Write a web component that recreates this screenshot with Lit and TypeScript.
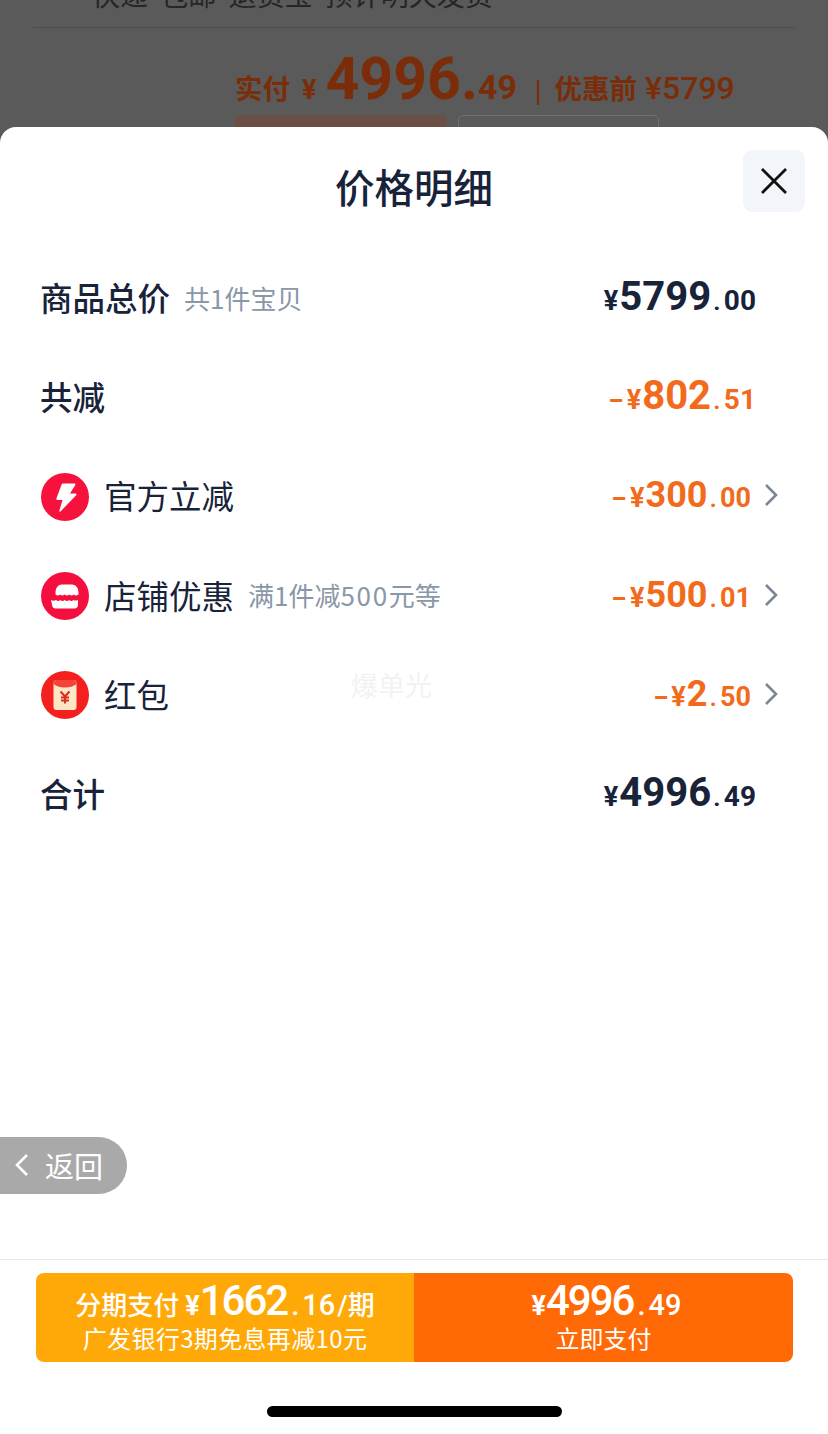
import { LitElement, html, css, svg } from "lit";
import { customElement } from "lit/decorators.js";

const bolt = html`<svg class="ic" viewBox="0 0 48 48"><circle cx="24" cy="24" r="24" fill="#f6123d"/><path d="M22 10.500h11.500c.8 0 1.200.8.8 1.500L29 20.500h5.500c.9 0 1.300 1 .7 1.700L19.500 38.500c-.6.6-1.500 0-1.200-.8L21.500 27h-5c-.8 0-1.300-.7-1.100-1.400L20.600 11.500c.2-.6.8-1 1.400-1z" fill="#fff"/></svg>`;
const store = html`<svg class="ic" viewBox="0 0 48 48"><circle cx="24" cy="24" r="24" fill="#f40f3f"/><path d="M17 12.500h14c4 0 6.500 3.500 6.500 8.500v1.500c-2 1.200-3.400 1.200-4.700 0-1.600 1.300-3 1.300-4.400 0-1.600 1.300-3.200 1.300-4.800 0-1.600 1.300-3 1.300-4.500 0-1.400 1.200-2.900 1.200-4.600 0V21c0-5 2.500-8.500 6.500-8.500z" fill="#fff"/><path d="M10.500 27.500c1.800.9 3.500.9 5 0 1.500 1.200 3 1.200 4.300 0 1.500 1.200 3 1.200 4.500 0 1.500 1.200 3 1.200 4.300 0 1.500 1.200 3 1.200 4.400 0 1.200.8 2.500.8 4.500 0V32c0 2.500-1.500 4-3.500 4h-19c-2 0-3.500-1.500-3.500-4z" fill="#fff" transform="translate(-.5 .5)"/></svg>`;
const packet = html`<svg class="ic" viewBox="0 0 48 48"><circle cx="24" cy="24" r="24" fill="#f4201e"/><rect x="12.500" y="9" width="23" height="30" rx="3" fill="#fde6c3"/><path d="M12.500 12c0-1.700 1.300-3 3-3h17c1.700 0 3 1.300 3 3v1c-3 2.500-7 3.400-11.500 3.400S15.500 15.500 12.500 13z" fill="#f4443a"/><path d="M19.500 20.500l4.500 5 4.500-5M24 25.500v7M20 26.500h8M20 29.500h8" fill="none" stroke="#d92b20" stroke-width="2"/></svg>`;
const chev = svg`<path d="M2 2l10 10L2 22" fill="none" stroke="#7b8794" stroke-width="2.600"/>`;

interface Row { kind: "plain" | "sub"; label: string; note?: unknown; icon?: unknown; minus?: boolean; big: string; dec: string; orange: boolean; }
const rows: Row[] = [
  { kind: "plain", label: "商品总价", note: "共1件宝贝", big: "5799", dec: "00", orange: false },
  { kind: "plain", label: "共减", minus: true, big: "802", dec: "51", orange: true },
  { kind: "sub", label: "官方立减", icon: bolt, minus: true, big: "300", dec: "00", orange: true },
  { kind: "sub", label: "店铺优惠", note: html`满1件减<span class="wide">500</span>元等`, icon: store, minus: true, big: "500", dec: "01", orange: true },
  { kind: "sub", label: "红包", icon: packet, minus: true, big: "2", dec: "50", orange: true },
  { kind: "plain", label: "合计", big: "4996", dec: "49", orange: false },
];

@customElement("app-root")
export class AppRoot extends LitElement {
  static styles = css`
    :host { display: block; width: 828px; height: 1434px; overflow: hidden; background: #5a5a5a;
      font-family: "Noto Sans CJK SC", "Noto Sans", sans-serif; color: #18233a; }
    .num { font-family: Roboto, "Noto Sans CJK SC", sans-serif; }
    .behind { height: 127px; overflow: hidden; display: flex; flex-direction: column; }
    .ship { margin: -21px 0 0 92px; height: 30px; font-size: 28px; line-height: 30px; color: #262626; white-space: nowrap; word-spacing: 6px; flex: none; }
    .rule { margin: 18px 33px 0 33px; height: 1px; background: #4e4e4e; flex: none; }
    .pay { display: flex; align-items: baseline; margin: 22px 0 0 235px; height: 58px; color: #7a2d08; white-space: nowrap; font-weight: 700; flex: none; }
    .pay .l { font-size: 27.500px; }
    .pay .y { font-size: 27px; margin: 0 9px 0 12px; }
    .pay .b { font-size: 59px; font-weight: 700; line-height: 58px; }
    .pay .d { font-size: 34px; }
    .pay .bar { font-size: 22px; margin: 0 13px 0 18px; }
    .pay .o { font-size: 32px; margin-left: 8px; font-weight: 500; }
    .tags { display: flex; gap: 11px; margin: 7px 0 0 235px; flex: none; }
    .tag { height: 40px; border-radius: 5px; box-sizing: border-box; border: 1px solid #6b4f45; }
    .tag.a { width: 212px; background: #6b4f45; }
    .tag.b { width: 201px; border-color: #7d6a60; }

    .sheet { height: 1307px; background: #fff; border-radius: 16px 16px 0 0; display: flex; flex-direction: column; position: relative; }
    .head { height: 123px; flex: none; display: flex; justify-content: center; box-sizing: border-box; padding-top: 31px; }
    .title { font-size: 39.500px; line-height: 56px; font-weight: 500; }
    .close { position: absolute; right: 23px; top: 23px; width: 62px; height: 62px; background: #f2f5f9; border-radius: 9px; display: flex; align-items: center; justify-content: center; }
    .close svg { width: 28px; height: 28px; }
    .rows { display: flex; flex-direction: column; padding: 0 50px 0 40px; }
    .row { height: 99.200px; display: flex; align-items: center; }
    .ic { width: 48px; height: 48px; margin: -2px 15px 0 1px; flex: none; }
    .label { font-size: 32.500px; line-height: 44px; white-space: nowrap; margin-bottom: 5px; }
    .plain .label { font-weight: 500; }
    .sub .label { font-weight: 400; }
    .note { font-size: 26px; color: #8a97a8; margin: 0 0 5px 14px; white-space: nowrap; }
    .wide { letter-spacing: 1.700px; }
    .amount { margin-left: auto; display: flex; align-items: baseline; white-space: nowrap; font-weight: 700; margin-bottom: 5px; }
    .amount.orange { color: #f26a1b; }
    .plain .amount { margin-right: 22px; }
    .amount .m { font-size: 27px; display: inline-block; transform: scaleX(1.600); margin: 0 5px 0 4px; }
    .amount .p { font-size: 27px; margin-right: 1px; }
    .amount .n { font-size: 40px; line-height: 44px; }
    .sub .amount .n { font-size: 36px; }
    .amount .d { font-size: 28px; font-weight: 700; }
    .amount .dot { margin: 0 3px 0 2px; font-weight: 500; }
    .sub .amount .d { font-size: 27px; }
    .sub svg.chev { width: 14px; height: 24px; margin: 0 0 5px 13px; flex: none; }
    .spacer { flex: 1; }
    .foot { flex: none; border-top: 1px solid #e8e8e8; height: 175px; box-sizing: border-box; padding: 13px 35px 0 36px; display: flex; flex-direction: column; }
    .btns { display: flex; height: 89px; border-radius: 8px; overflow: hidden; color: #fff; flex: none; }
    .btn { display: flex; flex-direction: column; align-items: center; justify-content: center; }
    .btn.l { width: 378px; background: #ffa908; }
    .btn.r { flex: 1; background: #ff6a07; }
    .line1 { display: flex; align-items: baseline; height: 40px; line-height: 40px; white-space: nowrap; font-weight: 500; margin-bottom: 2px; }
    .line1 .t { font-size: 26px; }
    .line1 .y { font-size: 27px; margin-left: 6px; font-weight: 700; }
    .line1 .n { font-size: 42px; font-weight: 500; letter-spacing: -2px; }
    .line1 .d { font-size: 29px; font-weight: 500; }
    .line1 .dot { margin: 0 3px 0 4px; }
    .line1 .s { font-size: 27px; margin-left: 2px; }
    .line2 { font-size: 24px; line-height: 30px; white-space: nowrap; margin-bottom: 2px; }
    .l .line2 { letter-spacing: .35px; }
    .home { width: 295px; height: 11px; background: #000; border-radius: 6px; margin: 44px 0 0 231px; flex: none; }

    .mark { position: absolute; left: 351px; top: 530px; font-size: 27px; line-height: 56px; color: #f2f2f2; }
    .back { position: absolute; left: 0; top: 1010px; width: 127px; height: 57px; background: #a9a9a9; border-radius: 0 29px 29px 0; display: flex; align-items: center; color: #fff; font-size: 29px; box-sizing: border-box; padding: 0 0 2px 15px; }
    .back svg { width: 14px; height: 24px; margin-right: 16px; }
  `;

  render() {
    return html`
      <div class="behind">
        <div class="ship">快递 包邮 退货宝 预计明天发货</div>
        <div class="rule"></div>
        <div class="pay">
          <span class="l">实付</span><span class="y num">¥</span><span class="b num">4996.</span><span class="d num">49</span><span class="bar">|</span><span class="l">优惠前</span><span class="o num">¥5799</span>
        </div>
        <div class="tags"><div class="tag a"></div><div class="tag b"></div></div>
      </div>
      <div class="sheet">
        <div class="head">
          <div class="title">价格明细</div>
          <div class="close"><svg viewBox="0 0 28 28"><path d="M2 2l24 24M26 2L2 26" stroke="#111" stroke-width="2.800" fill="none"/></svg></div>
        </div>
        <div class="rows">
          ${rows.map((r) => html`
            <div class="row ${r.kind}">
              ${r.icon ?? ""}
              <span class="label">${r.label}</span>
              ${r.note ? html`<span class="note">${r.note}</span>` : ""}
              <span class="amount num ${r.orange ? "orange" : ""}">${r.minus ? html`<span class="m">-</span>` : ""}<span class="p">¥</span><span class="n">${r.big}</span><span class="d"><span class="dot">.</span>${r.dec}</span></span>
              ${r.kind === "sub" ? html`<svg class="chev" viewBox="0 0 14 24">${chev}</svg>` : ""}
            </div>`)}
        </div>
        <div class="spacer"></div>
        <div class="foot">
          <div class="btns">
            <div class="btn l">
              <div class="line1"><span class="t">分期支付</span><span class="y num">¥</span><span class="n num">1662</span><span class="d num"><span class="dot">.</span>16</span><span class="s num">/期</span></div>
              <div class="line2">广发银行3期免息再减10元</div>
            </div>
            <div class="btn r">
              <div class="line1"><span class="y num">¥</span><span class="n num">4996</span><span class="d num"><span class="dot">.</span>49</span></div>
              <div class="line2">立即支付</div>
            </div>
          </div>
          <div class="home"></div>
        </div>
        <div class="mark">爆单光</div>
        <div class="back"><svg viewBox="0 0 14 24"><path d="M12 2L2 12l10 10" fill="none" stroke="#fff" stroke-width="2.600"/></svg>返回</div>
      </div>
    `;
  }
}
